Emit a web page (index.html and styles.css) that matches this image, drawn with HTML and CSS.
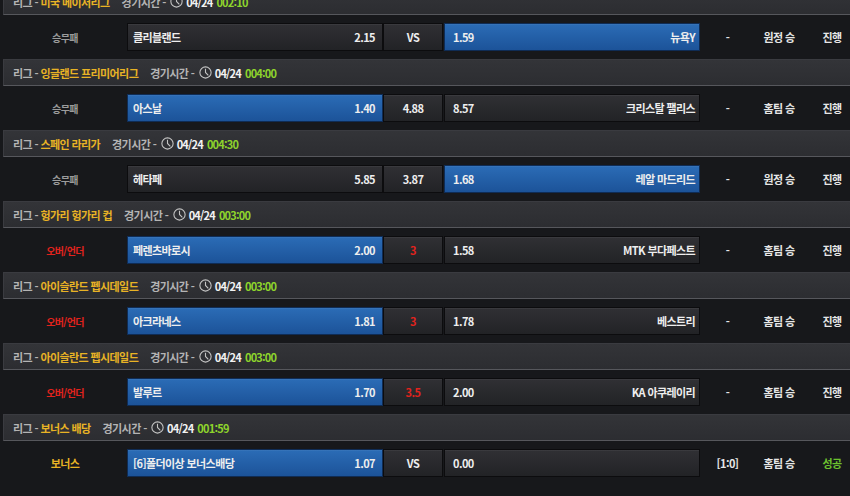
FILE: index.html
```html
<!DOCTYPE html>
<html lang="ko">
<head>
  <meta charset="UTF-8" />
  <meta name="viewport" content="width=device-width, initial-scale=1.0" />
  <title>베팅 내역</title>
  <link rel="stylesheet" href="styles.css">
</head>
<body>
  <div class="board">

    <div class="league">
      <span class="lg">리그 - <b class="lg-name">미국 메이저리그</b></span>
      <span class="kick">경기시간 - <svg class="clock" viewBox="0 0 12 12"><circle cx="6" cy="6" r="5.2"/><path d="M6 2.6V6l2.6 2.6"/></svg> <b>04/24</b> <b class="time">002:10</b></span>
    </div>
    <div class="match">
      <div class="kind">승무패</div>
      <div class="pick home"><span>클리블랜드</span><span>2.15</span></div>
      <div class="pick mid">VS</div>
      <div class="pick away on"><span>1.59</span><span>뉴욕Y</span></div>
      <div class="score">-</div>
      <div class="result">원정 승</div>
      <div class="state">진행</div>
    </div>

    <div class="league">
      <span class="lg">리그 - <b class="lg-name">잉글랜드 프리미어리그</b></span>
      <span class="kick">경기시간 - <svg class="clock" viewBox="0 0 12 12"><circle cx="6" cy="6" r="5.2"/><path d="M6 2.6V6l2.6 2.6"/></svg> <b>04/24</b> <b class="time">004:00</b></span>
    </div>
    <div class="match">
      <div class="kind">승무패</div>
      <div class="pick home on"><span>아스날</span><span>1.40</span></div>
      <div class="pick mid">4.88</div>
      <div class="pick away"><span>8.57</span><span>크리스탈 팰리스</span></div>
      <div class="score">-</div>
      <div class="result">홈팀 승</div>
      <div class="state">진행</div>
    </div>

    <div class="league">
      <span class="lg">리그 - <b class="lg-name">스페인 라리가</b></span>
      <span class="kick">경기시간 - <svg class="clock" viewBox="0 0 12 12"><circle cx="6" cy="6" r="5.2"/><path d="M6 2.6V6l2.6 2.6"/></svg> <b>04/24</b> <b class="time">004:30</b></span>
    </div>
    <div class="match">
      <div class="kind">승무패</div>
      <div class="pick home"><span>헤타페</span><span>5.85</span></div>
      <div class="pick mid">3.87</div>
      <div class="pick away on"><span>1.68</span><span>레알 마드리드</span></div>
      <div class="score">-</div>
      <div class="result">원정 승</div>
      <div class="state">진행</div>
    </div>

    <div class="league">
      <span class="lg">리그 - <b class="lg-name">헝가리 헝가리 컵</b></span>
      <span class="kick">경기시간 - <svg class="clock" viewBox="0 0 12 12"><circle cx="6" cy="6" r="5.2"/><path d="M6 2.6V6l2.6 2.6"/></svg> <b>04/24</b> <b class="time">003:00</b></span>
    </div>
    <div class="match">
      <div class="kind ou">오버/언더</div>
      <div class="pick home on"><span>페렌츠바로시</span><span>2.00</span></div>
      <div class="pick mid line">3</div>
      <div class="pick away"><span>1.58</span><span>MTK 부다페스트</span></div>
      <div class="score">-</div>
      <div class="result">홈팀 승</div>
      <div class="state">진행</div>
    </div>

    <div class="league">
      <span class="lg">리그 - <b class="lg-name">아이슬란드 펩시데일드</b></span>
      <span class="kick">경기시간 - <svg class="clock" viewBox="0 0 12 12"><circle cx="6" cy="6" r="5.2"/><path d="M6 2.6V6l2.6 2.6"/></svg> <b>04/24</b> <b class="time">003:00</b></span>
    </div>
    <div class="match">
      <div class="kind ou">오버/언더</div>
      <div class="pick home on"><span>아크라네스</span><span>1.81</span></div>
      <div class="pick mid line">3</div>
      <div class="pick away"><span>1.78</span><span>베스트리</span></div>
      <div class="score">-</div>
      <div class="result">홈팀 승</div>
      <div class="state">진행</div>
    </div>

    <div class="league">
      <span class="lg">리그 - <b class="lg-name">아이슬란드 펩시데일드</b></span>
      <span class="kick">경기시간 - <svg class="clock" viewBox="0 0 12 12"><circle cx="6" cy="6" r="5.2"/><path d="M6 2.6V6l2.6 2.6"/></svg> <b>04/24</b> <b class="time">003:00</b></span>
    </div>
    <div class="match">
      <div class="kind ou">오버/언더</div>
      <div class="pick home on"><span>발루르</span><span>1.70</span></div>
      <div class="pick mid line">3.5</div>
      <div class="pick away"><span>2.00</span><span>KA 아쿠레이리</span></div>
      <div class="score">-</div>
      <div class="result">홈팀 승</div>
      <div class="state">진행</div>
    </div>

    <div class="league">
      <span class="lg">리그 - <b class="lg-name">보너스 배당</b></span>
      <span class="kick">경기시간 - <svg class="clock" viewBox="0 0 12 12"><circle cx="6" cy="6" r="5.2"/><path d="M6 2.6V6l2.6 2.6"/></svg> <b>04/24</b> <b class="time">001:59</b></span>
    </div>
    <div class="match">
      <div class="kind bonus">보너스</div>
      <div class="pick home on"><span>[6]폴더이상 보너스배당</span><span>1.07</span></div>
      <div class="pick mid">VS</div>
      <div class="pick away"><span>0.00</span><span></span></div>
      <div class="score">[1:0]</div>
      <div class="result">홈팀 승</div>
      <div class="state win">성공</div>
    </div>

  </div>
</body>
</html>
```
FILE: styles.css
```css
* {
  box-sizing: border-box;
  margin: 0;
  padding: 0;
}
body {
  font-family: "Noto Sans CJK KR", "Noto Sans", sans-serif;
  font-size: 11px;
  letter-spacing: -0.6px;
  background: #17181b;
  color: #e6e6e6;
  overflow: hidden;
}
.board {
  width: 870px;
  margin-top: -12px;
  padding-left: 3px;
}
b {
  font-weight: 700;
}

/* league header bar */
.league {
  height: 27px;
  display: flex;
  align-items: center;
  gap: 12px;
  padding-left: 9px;
  background: linear-gradient(#333438, #2c2d31);
  border: 1px solid #3a3b40;
  border-bottom-color: #56575c;
  color: #b4b4b4;
  font-weight: 700;
}
.lg-name {
  color: #e8b325;
}
.kick {
  display: flex;
  align-items: center;
  gap: 2px;
  white-space: pre;
}
.kick b {
  color: #f2f2f2;
  letter-spacing: -0.8px;
}
.kick .time {
  margin-left: 2px;
  color: #8ed42c;
}
.clock {
  width: 13px;
  height: 13px;
  margin-right: 1px;
  fill: none;
  stroke: #c4c4c4;
  stroke-width: 1;
}

/* match row */
.match {
  height: 28px;
  margin: 8px 0;
  display: grid;
  grid-template-columns: 124px 256px 61px 256px 55px 48px 58px;
  align-items: center;
  font-weight: 700;
}
.kind {
  text-align: center;
  color: #9c9c9c;
  font-size: 10px;
}
.kind.ou {
  color: #e2231d;
}
.kind.bonus {
  color: #e8b325;
  font-size: 11px;
}
.pick {
  height: 28px;
  display: flex;
  align-items: center;
  justify-content: space-between;
  padding: 0 7px 0 5px;
  background: linear-gradient(#303034, #222326);
  border: 1px solid #0c0c0e;
  box-shadow: inset 0 1px 0 rgba(255, 255, 255, 0.05);
  color: #eeeeee;
}
.pick.on {
  background: linear-gradient(#2b6cb6, #1c5399);
  border-color: #0f2c55;
}
.pick.away {
  padding: 0 4px 0 8px;
}
.pick.mid {
  width: 60px;
  justify-content: center;
  padding: 0;
}
.pick.line {
  color: #e2231d;
}
.score,
.result,
.state {
  text-align: center;
  color: #e6e6e6;
}
.state.win {
  color: #6cc12f;
}
```
